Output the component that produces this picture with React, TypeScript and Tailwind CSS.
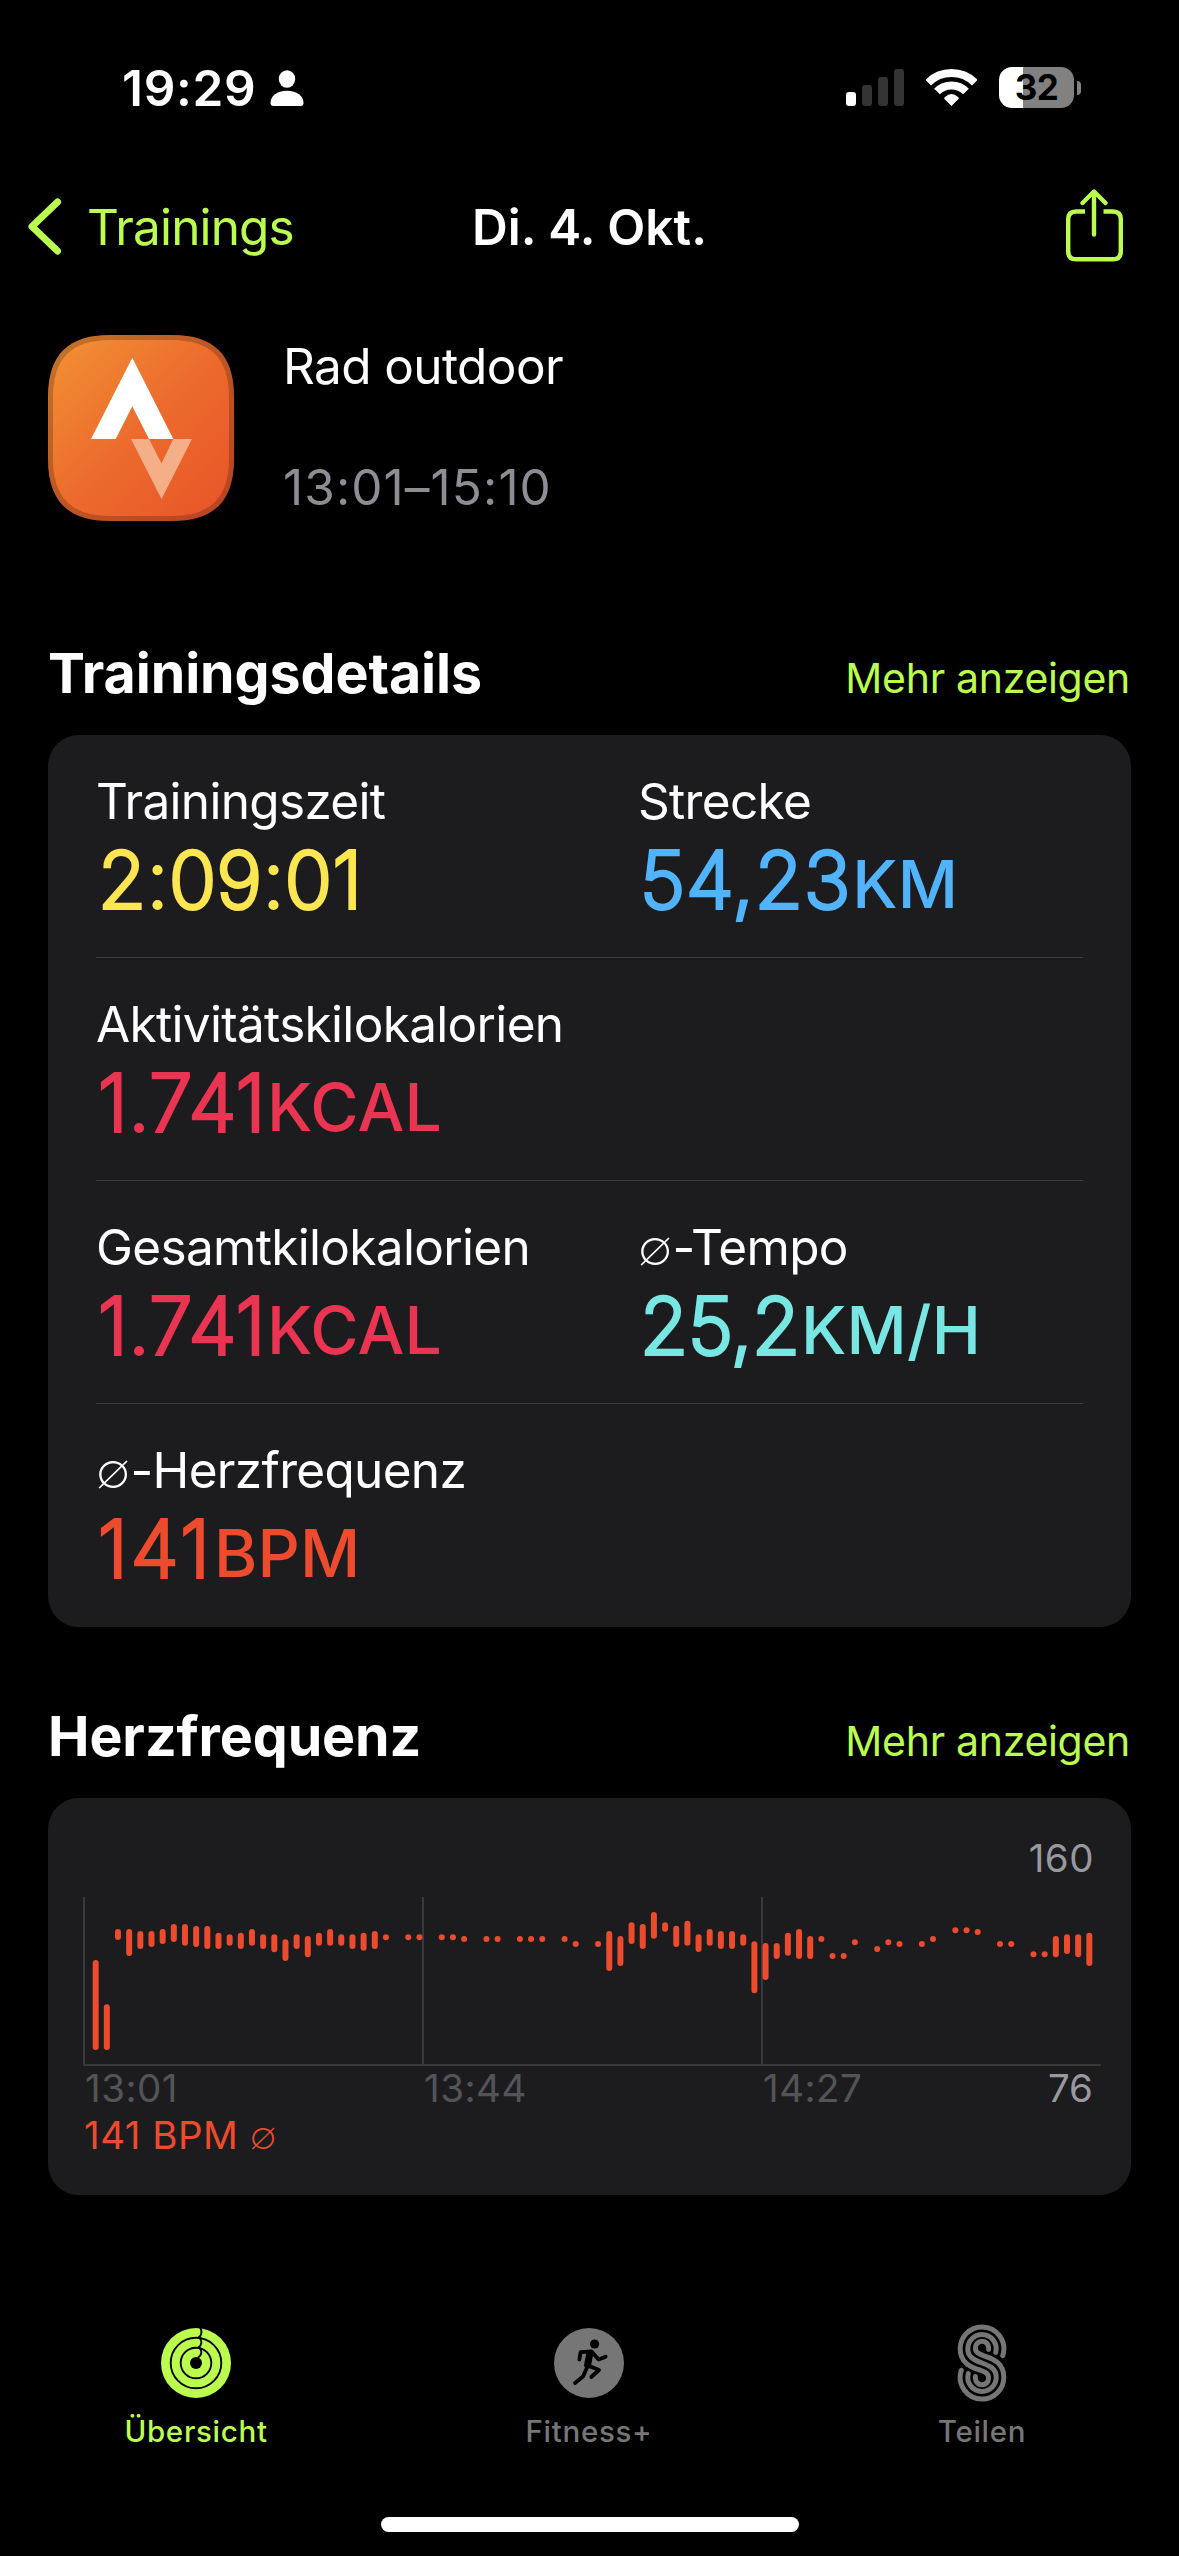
import { ReactNode } from 'react';

type Metric = { label: string; average?: boolean; value: string; unit?: string; color: string; tracking: string };

const metricRows: Metric[][] = [
  [
    { label: 'Trainingszeit', value: '2:09:01', color: 'text-[#fbe651]', tracking: 'tracking-[0.6px]' },
    { label: 'Strecke', value: '54,23', unit: 'KM', color: 'text-[#51b3fb]', tracking: 'tracking-[1px]' },
  ],
  [{ label: 'Aktivitätskilokalorien', value: '1.741', unit: 'KCAL', color: 'text-[#e93452]', tracking: 'tracking-[0.6px]' }],
  [
    { label: 'Gesamtkilokalorien', value: '1.741', unit: 'KCAL', color: 'text-[#e93452]', tracking: 'tracking-[0.6px]' },
    { label: '-Tempo', average: true, value: '25,2', unit: 'KM/H', color: 'text-[#78e7e3]', tracking: 'tracking-[-0.2px]' },
  ],
  [{ label: '-Herzfrequenz', average: true, value: '141', unit: 'BPM', color: 'text-[#ec4b2e]', tracking: 'tracking-[3px]' }],
];

// [slot, top, bottom] in chart units; equal top and bottom is a single reading
const heartRate: [number, number, number][] = [
  [0, 198, 450], [1, 331, 450], [2, 105, 120], [3, 105, 168], [4, 111, 147], [5, 111, 141], [6, 105, 132],
  [7, 90, 126], [8, 90, 137], [9, 96, 141], [10, 96, 147], [11, 116, 147], [12, 121, 137], [13, 116, 147],
  [14, 105, 137], [15, 121, 147], [16, 121, 157], [17, 136, 183], [18, 121, 147], [19, 126, 172], [20, 116, 137],
  [21, 105, 137], [22, 121, 137], [23, 121, 147], [24, 116, 152], [25, 111, 147], [26, 121, 121], [28, 121, 121],
  [29, 121, 121], [31, 121, 121], [32, 121, 121], [33, 126, 126], [35, 126, 126], [36, 126, 126], [38, 126, 126],
  [39, 126, 126], [40, 126, 126], [42, 126, 126], [43, 141, 141], [45, 141, 141], [46, 111, 213], [47, 126, 198],
  [48, 85, 132], [49, 90, 147], [50, 54, 116], [51, 85, 95], [52, 95, 141], [53, 80, 137], [54, 121, 156],
  [55, 105, 137], [56, 111, 147], [57, 111, 147], [58, 121, 137], [59, 142, 280], [60, 147, 240], [61, 147, 177],
  [62, 116, 167], [63, 105, 177], [64, 126, 177], [65, 126, 126], [66, 177, 177], [67, 177, 177], [68, 136, 136],
  [70, 156, 156], [71, 136, 136], [72, 141, 141], [74, 141, 141], [75, 126, 126], [77, 100, 100], [78, 100, 100],
  [79, 105, 105], [81, 141, 141], [82, 141, 141], [84, 172, 172], [85, 172, 172], [86, 126, 172], [87, 121, 162],
  [88, 121, 172], [89, 116, 198],
];

function StatusBar() {
  return (
    <div className="flex h-[170px] items-start justify-between pt-[58px] pr-[98px] pl-[122px]">
      <div className="flex items-start gap-[14px]">
        <span className="text-[49.5px] leading-[60px] font-semibold tracking-[0.7px]">19:29</span>
        <svg className="mt-[12px] h-9 w-[34px]" viewBox="0 0 34 36" fill="currentColor">
          <ellipse cx="17" cy="9" rx="8.2" ry="8.7" />
          <path d="M0.5 33C0.5 26 7 20.8 17 20.8S33.5 26 33.5 33Q33.5 36 30.5 36H3.5Q0.5 36 0.5 33Z" />
        </svg>
      </div>
      <div className="flex items-start">
        <div className="mt-[11px] mr-[22px] flex h-[37px] items-end gap-[6px]">
          <span className="h-[14px] w-[10px] rounded-[3px] bg-white" />
          <span className="h-[21px] w-[10px] rounded-[3px] bg-[#343434]" />
          <span className="h-[29px] w-[10px] rounded-[3px] bg-[#343434]" />
          <span className="h-[37px] w-[10px] rounded-[3px] bg-[#343434]" />
        </div>
        <svg className="mt-[11px] mr-[22px] h-[37px] w-[51px]" viewBox="0 0 51 37" fill="none" stroke="currentColor" strokeWidth="8">
          <path d="M2.2 13.7A33 33 0 0 1 48.8 13.7" />
          <path d="M11 22.5A20.5 20.5 0 0 1 40 22.5" />
          <path d="M25.5 37L18.2 29.7Q18 28.6 19 28Q25.5 22 32 28Q33 28.6 32.8 29.7Z" fill="currentColor" stroke="none" />
        </svg>
        <div className="mt-[9px] flex items-center gap-[3px]">
          <div className="flex h-[41px] w-[75px] items-center justify-center rounded-[13px] bg-linear-to-r from-white from-[32%] to-[#818181] to-[32%] text-[35px] leading-[41px] font-bold tracking-[-0.6px] text-black">
            32
          </div>
          <span className="h-[14px] w-[4px] rounded-r-full bg-[#818181]" />
        </div>
      </div>
    </div>
  );
}

function NavBar() {
  return (
    <div className="grid h-[114px] grid-cols-[1fr_auto_1fr] items-center px-[27px] text-[49.5px] leading-[60px]">
      <div className="flex items-center text-[#bafd4f]">
        <svg className="mr-[25px] h-[58px] w-[35px]" viewBox="0 0 35 58" fill="none" stroke="currentColor" strokeWidth="7" strokeLinecap="round" strokeLinejoin="round">
          <path d="M30.5 4L5 28.5L30.5 53" />
        </svg>
        <span className="tracking-[-0.86px]">Trainings</span>
      </div>
      <h1 className="font-semibold tracking-[0.1px]">Di. 4. Okt.</h1>
      <svg className="mr-[29px] mb-1 h-[73px] w-[58px] justify-self-end text-[#bafd4f]" viewBox="0 0 58 73" fill="none" stroke="currentColor" strokeWidth="4.4" strokeLinecap="round" strokeLinejoin="round">
        <path d="M20 22.5H11Q3.2 22.5 3.2 30.3V62.5Q3.2 70.3 11 70.3H48Q55.8 70.3 55.8 62.5V30.3Q55.8 22.5 48 22.5H38.5" strokeLinecap="butt" />
        <path d="M29 45.5V3M17.5 14L29 2.5L40.5 14" />
      </svg>
    </div>
  );
}

function WorkoutSummary() {
  return (
    <div className="mt-[51px] flex gap-[49px] pl-[48px]">
      <svg className="h-[186px] w-[186px]" viewBox="0 0 186 186">
        <defs>
          <linearGradient id="appIcon" x1="0" y1="0" x2="1" y2="1">
            <stop offset="0" stopColor="#f29335" />
            <stop offset="0.5" stopColor="#ec6b2d" />
            <stop offset="1" stopColor="#e85328" />
          </linearGradient>
        </defs>
        <path d="M0 62C0 20 20 0 62 0H124C166 0 186 20 186 62V124C186 166 166 186 124 186H62C20 186 0 166 0 124Z" fill="url(#appIcon)" />
        <path d="M2.5 62C2.5 22 22 2.5 62 2.5H124C164 2.5 183.5 22 183.5 62V124C183.5 164 164 183.5 124 183.5H62C22 183.5 2.5 164 2.5 124Z" fill="none" stroke="#000" strokeOpacity="0.2" strokeWidth="5" />
        <path d="M84.3 22.7L125.3 104H101L84.3 71.2L67.7 104H43Z" fill="#fff" />
        <path d="M83 104H101L113.5 128.5L125.3 104H144L113.5 164Z" fill="#f4af89" />
      </svg>
      <div className="flex flex-col gap-[61px] pt-px text-[49.5px] leading-[60px]">
        <span className="tracking-[-0.6px]">Rad outdoor</span>
        <span className="tracking-[1.09px] text-[#8e8d93]">13:01–15:10</span>
      </div>
    </div>
  );
}

function Section({ title, className, children }: { title: string; className: string; children: ReactNode }) {
  return (
    <section className={`px-[48px] ${className}`}>
      <div className="flex h-[97px] items-baseline justify-between pr-px">
        <h2 className="text-[55.5px] leading-[70px] font-bold tracking-[-0.08px]">{title}</h2>
        <span className="text-[41px] leading-[50px] tracking-[-0.3px] text-[#bafd4f]">Mehr anzeigen</span>
      </div>
      <div className="rounded-[31px] bg-[#1c1c1e]">{children}</div>
    </section>
  );
}

function MetricCell({ label, average, value, unit, color, tracking }: Metric) {
  return (
    <div>
      <div className="text-[49.5px] leading-[60px] tracking-[-0.68px]">
        {average ? <span className="mr-px font-extralight">∅</span> : null}
        {label}
      </div>
      <div className={`mt-[4px] pl-[2px] text-[78px] leading-[90px] ${color}`}>
        <span className={`font-extralight [-webkit-text-stroke:4px_currentColor] ${tracking}`}>{value}</span>
        {unit ? <span className="ml-px text-[66px] font-medium tracking-[0.2px]">{unit}</span> : null}
      </div>
    </div>
  );
}

function HeartRateChart() {
  return (
    <svg className="h-[169px] w-[1018px]" viewBox="0 0 3054 507" fill="none">
      <path d="M3 0V504M1020 0V504M2037 0V504M0 504H3054" stroke="#39393b" strokeWidth="6" />
      {heartRate.map(([slot, top, bottom]) => (
        <path key={slot} d={`M${38 + slot * 33.494} ${top}V${bottom + 0.1}`} stroke="#ec4b2e" strokeWidth="18" strokeLinecap="round" />
      ))}
    </svg>
  );
}

function RingsIcon() {
  return (
    <svg className="h-[70px] w-[70px]" viewBox="0 0 70 70" fill="none" stroke="#000" strokeWidth="1.9">
      <circle cx="35" cy="35" r="35" fill="currentColor" stroke="none" />
      <circle cx="35" cy="35" r="25.3" />
      <circle cx="35" cy="35" r="15.3" />
      <circle cx="35" cy="35" r="6" fill="#000" stroke="none" />
      <path d="M38.5 -1C41.3 2 41.3 7 37.5 9.6M38.5 10C41.3 12.5 41 17 37.5 19.6M38.5 20C41.3 22.5 41 27 37 29.6" />
    </svg>
  );
}

function RunnerIcon() {
  return (
    <svg className="h-[70px] w-[70px]" viewBox="0 0 70 70" fill="none" stroke="#000" strokeLinecap="round" strokeLinejoin="round">
      <circle cx="35" cy="35" r="35" fill="currentColor" stroke="none" />
      <circle cx="40.6" cy="16" r="4.6" fill="#000" stroke="none" />
      <path d="M25.4 31.5L26.6 24.2L37.5 23.5L44.6 31.5L51.6 28.8M34 37.5L45 42L37.3 49M33.5 38.5L29 48.5L21 55" strokeWidth="3.8" />
      <path d="M35.8 25.5L33.6 37" strokeWidth="7" />
    </svg>
  );
}

function SharingIcon() {
  return (
    <svg className="h-[78px] w-[50px]" viewBox="169 72 150 236" fill="none" stroke="currentColor" strokeWidth="15" strokeLinecap="round">
      <path d="M306.6 168A66 66 0 0 0 244 81A66 66 0 0 0 178 147C178 188 208 202 236 211C256 218 264 222 264 236A20 20 0 0 1 224 236V231" />
      <path d="M285.5 158A43 43 0 0 0 244 104A43 43 0 0 0 201 147C201 172 218 180 244 190S287 208 287 233A43 43 0 0 1 244 276A43 43 0 0 1 202.5 222" />
      <path d="M181.4 212A66 66 0 0 0 244 299A66 66 0 0 0 310 233C310 192 280 178 252 169C232 162 224 158 224 144A20 20 0 0 1 264 144V149" />
    </svg>
  );
}

function Tab({ icon, label, active }: { icon: ReactNode; label: string; active?: boolean }) {
  return (
    <div className={`flex flex-1 flex-col items-center gap-[11px] ${active ? 'text-[#bafd4f]' : 'text-[#767676]'}`}>
      <div className="flex h-[78px] items-center">{icon}</div>
      <span className="text-[29.5px] leading-[36px] font-medium tracking-[0.7px]">{label}</span>
    </div>
  );
}

export default function App() {
  return (
    <div className="min-h-[2556px] w-[1179px] bg-black font-['Inter',sans-serif] text-white">
      <StatusBar />
      <NavBar />
      <WorkoutSummary />
      <Section title="Trainingsdetails" className="mt-[117px]">
        <div className="px-[48px]">
          {metricRows.map((row, i) => (
            <div key={i} className="grid h-[223px] grid-cols-[542px_1fr] border-b border-[#3d3d40] pt-[36px] last:border-b-0">
              {row.map((metric) => (
                <MetricCell key={metric.label} {...metric} />
              ))}
            </div>
          ))}
        </div>
      </Section>
      <Section title="Herzfrequenz" className="mt-[74px]">
        <div className="h-[397px] pt-[37px] pl-[35px] text-[38.5px] leading-[44px] tracking-[0.5px]">
          <div className="mb-[16px] pr-[37px] text-right leading-[46px] text-[#98989f]">160</div>
          <HeartRateChart />
          <div className="flex pr-[38px] pl-[2px] text-[#545458]">
            <span className="w-[339px]">13:01</span>
            <span className="w-[339px]">13:44</span>
            <span>14:27</span>
            <span className="ml-auto tracking-normal text-[#98989f]">76</span>
          </div>
          <div className="mt-[3px] pl-px text-[#ec4b2e]">
            141 BPM <span className="font-extralight">∅</span>
          </div>
        </div>
      </Section>
      <div className="mt-[129px] mr-[0.5px] -ml-[0.5px] flex">
        <Tab icon={<RingsIcon />} label="Übersicht" active />
        <Tab icon={<RunnerIcon />} label="Fitness+" />
        <Tab icon={<SharingIcon />} label="Teilen" />
      </div>
      <div className="mx-auto mt-[68px] h-[15px] w-[418px] rounded-full bg-white" />
    </div>
  );
}
